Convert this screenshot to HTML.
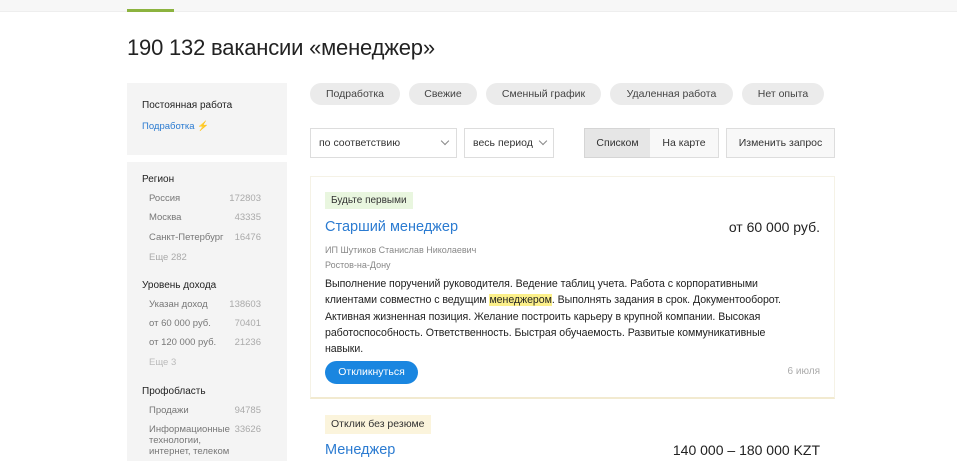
<!DOCTYPE html>
<html><head><meta charset="utf-8"><style>
*{margin:0;padding:0;box-sizing:border-box}
body{width:957px;height:461px;overflow:hidden;background:#fff;font-family:"Liberation Sans",Arial,sans-serif;color:#333;position:relative}
.a{position:absolute}
.topbar{left:0;top:0;width:957px;height:12px;background:#f7f7f7;border-bottom:1px solid #eee}
.green{left:127px;top:9px;width:47px;height:3px;background:#8cb33f}
h1{position:absolute;left:127px;top:35px;font-size:22px;font-weight:normal;color:#222;letter-spacing:-0.2px}
.side{left:127px;width:160px;background:#f4f4f4}
.st{font-size:10px;color:#222}
.sl{font-size:9.5px;color:#777}
.sn{font-size:9.5px;color:#aaa;position:absolute;right:0}
.chip{top:83px;height:22px;border-radius:11px;background:#ebebeb;font-size:10.5px;color:#444;line-height:22px;text-align:center}
.box{top:128px;height:30px;border:1px solid #ddd;font-size:10.5px;color:#333;line-height:28px;background:#fff}
.chev{position:absolute;width:6px;height:6px;border-right:1px solid #888;border-bottom:1px solid #888;transform:rotate(45deg)}
.p{font-size:10.6px;color:#222;line-height:16.3px;letter-spacing:-0.05px}
</style></head><body>
<div class="a topbar"></div><div class="a green"></div>
<h1>190 132 вакансии «менеджер»</h1>

<div class="a side" style="top:83px;height:72px"></div>
<div class="a st" style="left:142px;top:100px">Постоянная работа</div>
<div class="a" style="left:142px;top:121px;font-size:9.5px;color:#2b7bd1">Подработка <span style="color:#f5b82e">⚡</span></div>
<div class="a side" style="top:162px;height:299px"></div>
<div class="a st" style="left:142px;top:174px">Регион</div>
<div class="a" style="left:149px;top:193px;width:112px"><div class="sl">Россия</div><span class="sn" style="top:0">172803</span></div>
<div class="a" style="left:149px;top:212px;width:112px"><div class="sl">Москва</div><span class="sn" style="top:0">43335</span></div>
<div class="a" style="left:149px;top:232px;width:112px"><div class="sl">Санкт-Петербург</div><span class="sn" style="top:0">16476</span></div>
<div class="a sl" style="left:149px;top:252px;color:#aaa">Еще 282</div>
<div class="a st" style="left:142px;top:280px">Уровень дохода</div>
<div class="a" style="left:149px;top:299px;width:112px"><div class="sl">Указан доход</div><span class="sn" style="top:0">138603</span></div>
<div class="a" style="left:149px;top:318px;width:112px"><div class="sl">от 60 000 руб.</div><span class="sn" style="top:0">70401</span></div>
<div class="a" style="left:149px;top:337px;width:112px"><div class="sl">от 120 000 руб.</div><span class="sn" style="top:0">21236</span></div>
<div class="a sl" style="left:149px;top:357px;color:#bbb">Еще 3</div>
<div class="a st" style="left:142px;top:386px">Профобласть</div>
<div class="a" style="left:149px;top:405px;width:112px"><div class="sl">Продажи</div><span class="sn" style="top:0">94785</span></div>
<div class="a" style="left:149px;top:424px;width:112px"><div class="sl" style="line-height:11px">Информационные<br>технологии,<br>интернет, телеком</div><span class="sn" style="top:0">33626</span></div>

<div class="a chip" style="left:310px;width:90px">Подработка</div>
<div class="a chip" style="left:409px;width:68px">Свежие</div>
<div class="a chip" style="left:486px;width:115px">Сменный график</div>
<div class="a chip" style="left:610px;width:123px">Удаленная работа</div>
<div class="a chip" style="left:742px;width:82px">Нет опыта</div>

<div class="a box" style="left:310px;width:147px;padding-left:8px">по соответствию<span class="chev" style="left:131px;top:9px"></span></div>
<div class="a box" style="left:464px;width:90px;padding-left:8px">весь период<span class="chev" style="left:75px;top:9px"></span></div>
<div class="a box" style="left:584px;width:67px;text-align:center;background:#e6e6e6;border-color:#d5d5d5">Списком</div>
<div class="a box" style="left:650px;width:69px;text-align:center;border-left:none;background:#f8f8f8">На карте</div>
<div class="a box" style="left:726px;width:109px;text-align:center;background:#f8f8f8">Изменить запрос</div>

<div class="a" style="left:310px;top:176px;width:525px;height:223px;border:1px solid #f5f2e6;border-bottom:2px solid #f2ead0"></div>
<div class="a" style="left:325px;top:192px;height:17px;padding:0 6px;background:#e9f6df;font-size:10px;line-height:17px;color:#333">Будьте первыми</div>
<div class="a" style="left:325px;top:219px;font-size:14.5px;color:#2b7bd1">Старший менеджер</div>
<div class="a" style="right:137px;top:219px;font-size:14px;color:#222">от 60 000 руб.</div>
<div class="a" style="left:325px;top:245px;font-size:9px;color:#888">ИП Шутиков Станислав Николаевич</div>
<div class="a" style="left:325px;top:260px;font-size:9px;color:#888">Ростов-на-Дону</div>
<div class="a p" style="left:325px;top:276px;width:475px">Выполнение поручений руководителя. Ведение таблиц учета. Работа с корпоративными клиентами совместно с ведущим <span style="background:#fcf08a">менеджером</span>. Выполнять задания в срок. Документооборот. Активная жизненная позиция. Желание построить карьеру в крупной компании. Высокая работоспособность. Ответственность. Быстрая обучаемость. Развитые коммуникативные навыки.</div>
<div class="a" style="left:325px;top:361px;width:93px;height:23px;border-radius:12px;background:#1a86e0;color:#fff;font-size:10.5px;line-height:23px;text-align:center">Откликнуться</div>
<div class="a" style="right:137px;top:366px;font-size:10px;color:#aaa">6 июля</div>

<div class="a" style="left:325px;top:415px;height:19px;padding:0 6px;background:#fbf4dc;font-size:10.5px;line-height:19px;color:#333">Отклик без резюме</div>
<div class="a" style="left:325px;top:442px;font-size:14.5px;color:#2b7bd1">Менеджер</div>
<div class="a" style="right:137px;top:442px;font-size:14px;color:#222">140 000 – 180 000 KZT</div>
</body></html>
